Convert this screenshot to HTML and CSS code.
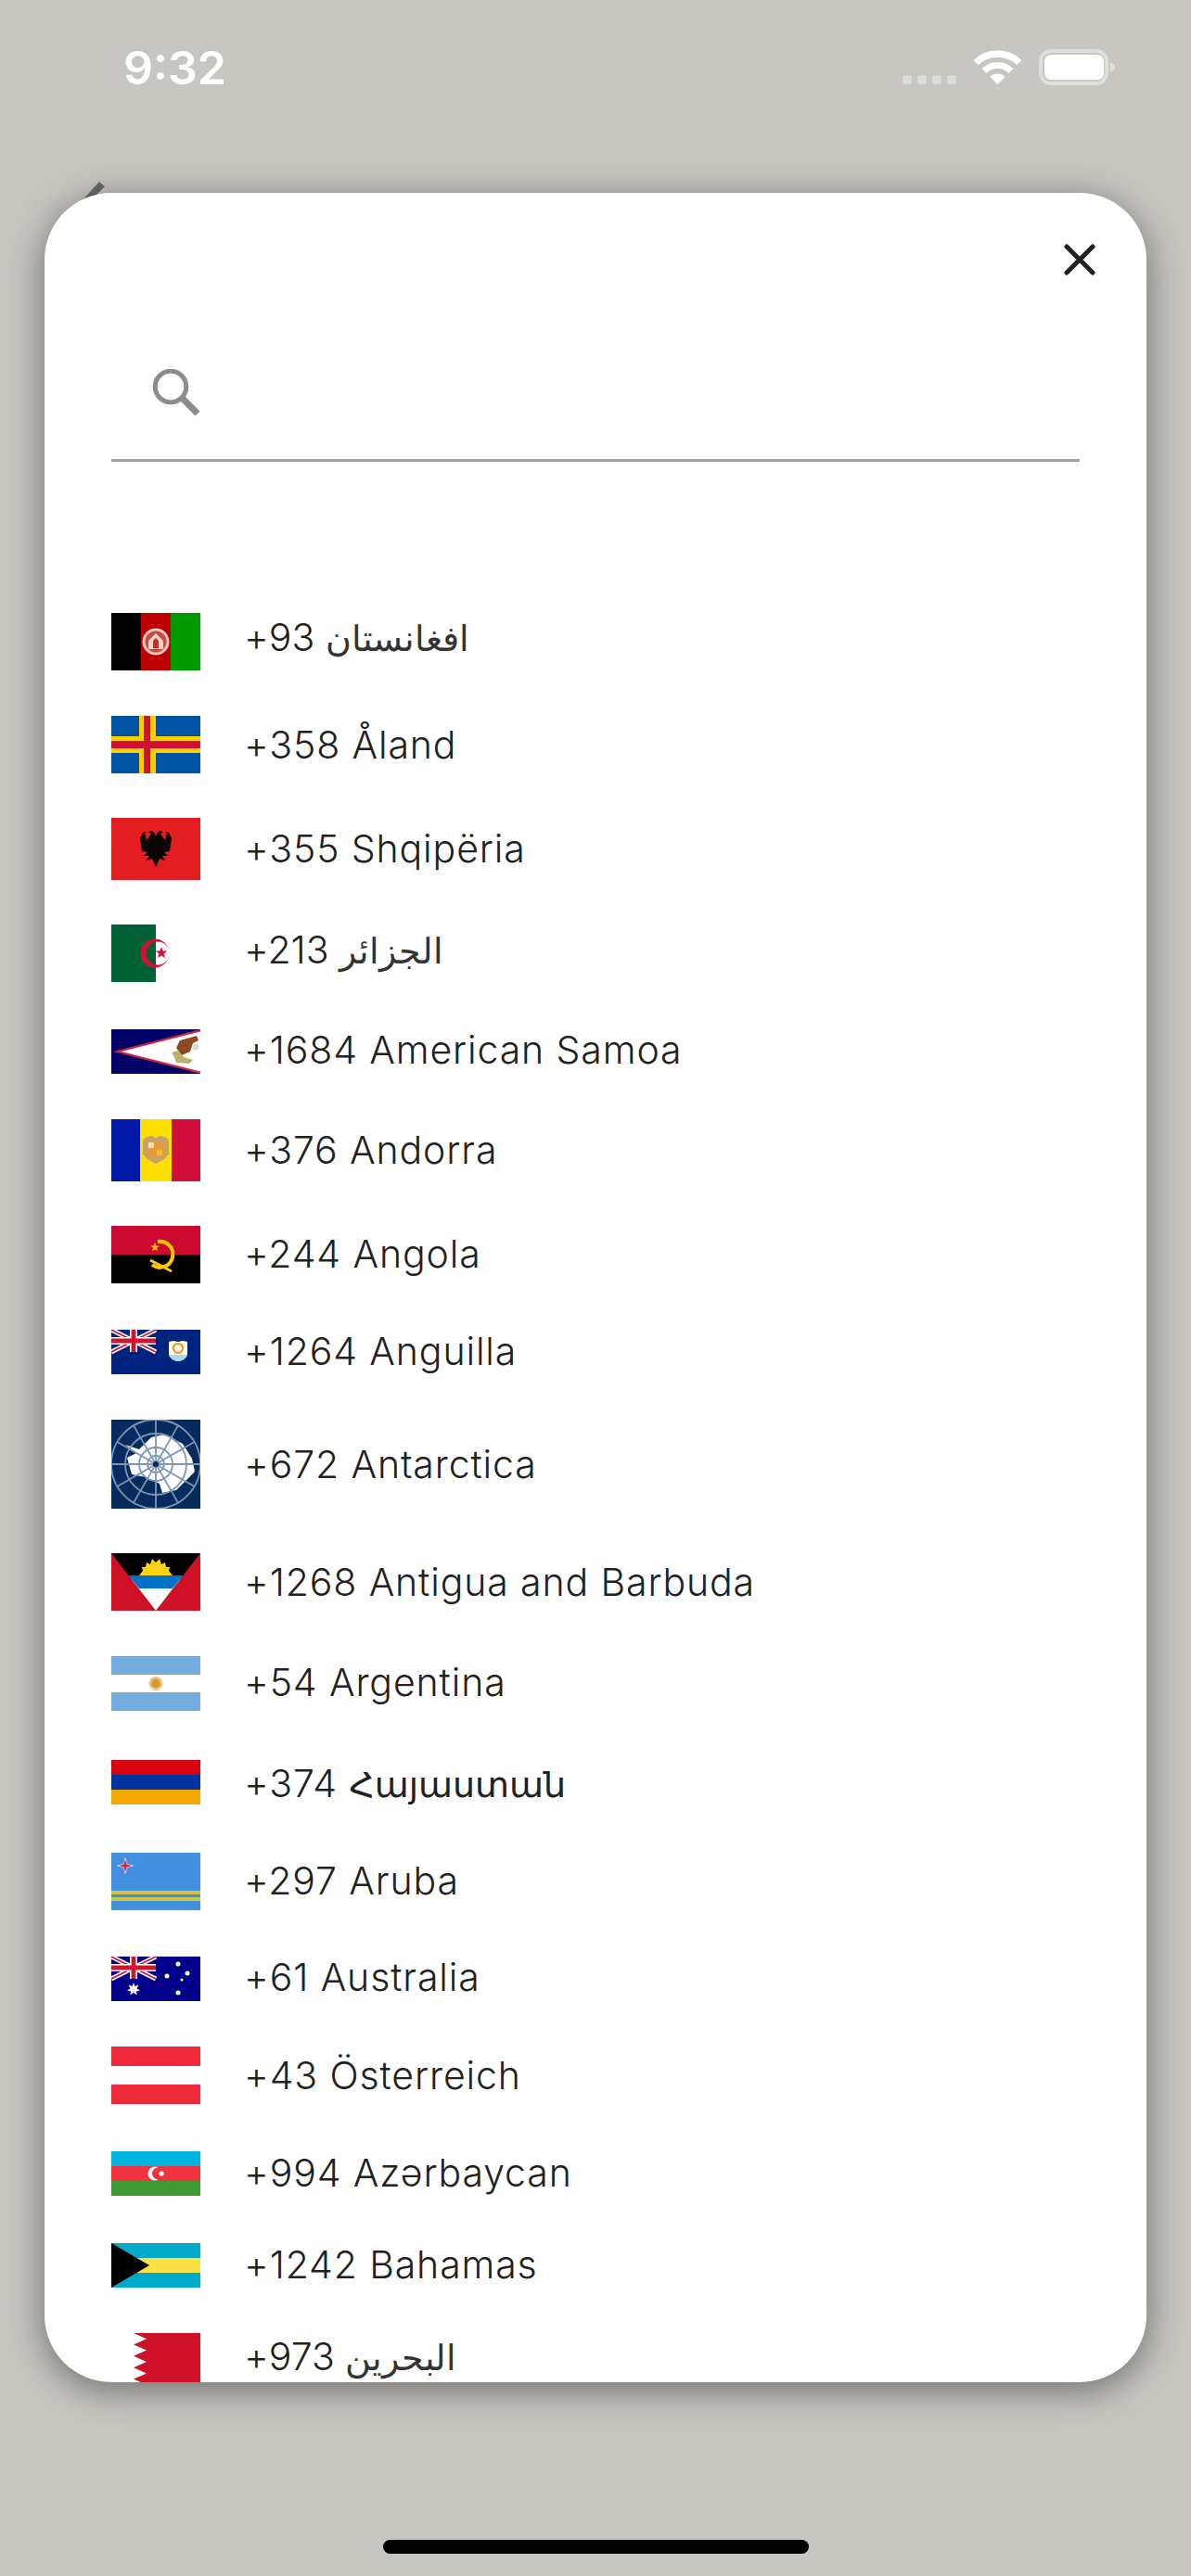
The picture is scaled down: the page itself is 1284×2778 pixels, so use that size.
FILE: index.html
```html
<!DOCTYPE html>
<html lang="en">
<head>
<meta charset="utf-8">
<title>Country code picker</title>
<link rel="stylesheet" href="styles.css">
</head>
<body>
<div class="screen">
  <svg class="behind" viewBox="0 0 40 40"><path d="M22 1 28 6 4 30 0 25Z"/></svg>
  <header class="status">
    <span class="time">9:32</span>
    <div class="status-icons">
      <svg class="signal" viewBox="0 0 58 10"><rect width="10" height="10" rx="3"/><rect x="16" width="10" height="10" rx="3"/><rect x="32" width="10" height="10" rx="3"/><rect x="48" width="10" height="10" rx="3"/></svg>
      <svg class="wifi" viewBox="0 0 51 37"><g fill="none" stroke="#fff"><path stroke-width="7.5" d="M2.2 13.7A33 33 0 0 1 48.8 13.7"/><path stroke-width="7" d="M11 22.5A20.5 20.5 0 0 1 40 22.5"/></g><path fill="#fff" d="M25.5 37 17.3 28.8A11.6 11.6 0 0 1 33.7 28.8Z"/></svg>
      <svg class="battery" viewBox="0 0 82 39"><rect x="2" y="2" width="71" height="35" rx="11" fill="none" stroke="#dededa" stroke-width="4"/><rect x="6" y="6" width="64" height="27" rx="7" fill="#fff"/><path fill="#dededa" d="M77 14c3 1 5 3 5 5.500s-2 4.500-5 5.500Z"/></svg>
    </div>
  </header>

  <main class="card">
    <div class="close-row">
      <svg class="close" viewBox="0 0 34 34"><path d="M3 3 31 31M31 3 3 31"/></svg>
    </div>
    <div class="search">
      <svg class="search-icon" viewBox="0 0 52 52"><circle cx="20" cy="19" r="16.800" /><path d="M33 32 49 48"/></svg>
    </div>
    <ul class="list">
      <li class="row m9">
        <svg class="flag h62" viewBox="0 0 96 62"><rect width="96" height="62" fill="#be0000"/><rect width="32" height="62" fill="#000"/><rect x="64" width="32" height="62" fill="#009a00"/><g class="soft"><circle cx="48" cy="31" r="13" fill="#c84a40" stroke="#ecc8c0" stroke-width="3"/><path d="M40 39h16v-9l-8-8-8 8Z" fill="#f0d4cc"/><path d="M45 38v-8l3-3 3 3v8Z" fill="#be3028"/></g></svg>
        <span class="name">+93 <span class="ar wide">افغانستان</span></span>
      </li>
      <li class="row g49 m1">
        <svg class="flag h62" viewBox="0 0 96 62"><rect width="96" height="62" fill="#0053a5"/><path fill="#ffce00" d="M30 0h18v22h48v18H48v22H30V40H0V22h30Z"/><path fill="#d21034" d="M35 0h7v27h54v8H42v27h-7V35H0v-8h35Z"/></svg>
        <span class="name">+358 Åland</span>
      </li>
      <li class="row m2">
        <svg class="flag h67" viewBox="0 0 96 67"><rect width="96" height="67" fill="#e41e20"/><path class="soft" fill="#0a0606" d="M48 53 44 44 38 46 41 41 35 41 39 37 33 36 31 22 34 16 38 15 36 17 38 24 41 20 43 17 40 15 44 14 47 17 48 20 49 17 52 14 56 15 53 17 55 20 58 24 60 17 58 15 62 16 65 22 63 36 57 37 61 41 55 41 58 46 52 44Z"/></svg>
        <span class="name">+355 Shqipëria</span>
      </li>
      <li class="row m7">
        <svg class="flag h62" viewBox="0 0 96 62"><rect width="96" height="62" fill="#fff"/><rect width="48" height="62" fill="#006233"/><g class="soft"><path fill="#d21034" fill-rule="evenodd" d="M47 15.500a15.500 15.500 0 1 0 0 31 15.500 15.500 0 0 0 15-11.500 12.500 12.500 0 1 1 0-8 15.500 15.500 0 0 0-15-11.500Z"/><path fill="#d21034" d="m54 24 1.700 4.400 4.700.2-3.700 3 1.300 4.500-4-2.600-4 2.600 1.300-4.500-3.700-3 4.700-.2Z"/></g></svg>
        <span class="name">+213 <span class="ar">الجزائر</span></span>
      </li>
      <li class="row g51 m5">
        <svg class="flag h48" viewBox="0 0 96 48"><rect width="96" height="48" fill="#000066"/><path fill="#c8283c" d="M96 0 2 24 96 48Z"/><path fill="#fff" d="M96 2.500 11 24 96 45.500Z"/><g class="soft"><path fill="#8a4b1e" d="M92 7 74 12 70 20 76 28 85 24 88 15 94 12Z"/><path fill="#bdb06a" d="M65 25 72 23 78 30 88 33 84 37 70 36 68 30Z"/><circle cx="91" cy="19" r="3.500" fill="#d8d8d8"/></g></svg>
        <span class="name">+1684 American Samoa</span>
      </li>
      <li class="row g49 m2">
        <svg class="flag h67" viewBox="0 0 96 67"><rect width="96" height="67" fill="#fedf00"/><rect width="31" height="67" fill="#0018a8"/><rect x="65" width="31" height="67" fill="#d0103a"/><g class="soft"><path fill="#c4a26b" d="M36 20 43 18 48 20 53 18 60 20 62 24V38L56 44 48 48 40 44 34 38V24Z"/><rect x="39" y="24" width="18" height="17" rx="2" fill="#ea9a3c"/><rect x="40" y="25" width="6" height="6" fill="#f4e4a0"/><rect x="49" y="33" width="6" height="6" fill="#e8c030"/></g></svg>
        <span class="name">+376 Andorra</span>
      </li>
      <li class="row m2">
        <svg class="flag h62" viewBox="0 0 96 62"><rect width="96" height="31" fill="#cc092f"/><rect y="31" width="96" height="31" fill="#000"/><g class="soft"><g fill="none" stroke="#ffcb00"><path stroke-width="4" d="M50 17A14 14 0 1 1 44 42"/><path stroke-width="3" d="M42 37 65 49"/></g><path fill="#ffcb00" d="m47 18 1.200 3.400 3.600.1-2.900 2.200 1 3.500-2.900-2-2.900 2 1-3.500-2.900-2.200 3.600-.1Z"/></g></svg>
        <span class="name">+244 Angola</span>
      </li>
      <li class="row g50 m3">
        <svg class="flag h48" viewBox="0 0 96 48"><rect width="96" height="48" fill="#00247d"/><g fill="none"><path stroke="#fff" stroke-width="4.800" d="M0 0 48 24M48 0 0 24"/><path stroke="#cf142b" stroke-width="1.600" d="M0 0 48 24M48 0 0 24"/><path stroke="#fff" stroke-width="8" d="M24 0V24M0 12H48"/><path stroke="#cf142b" stroke-width="4.800" d="M24 0V24M0 12H48"/></g><g class="soft"><path fill="#fff" d="M62 13 67 12 72 13 77 12 82 13V26C82 30 76 34 72 34 68 34 62 30 62 26Z"/><path fill="#a8d8ea" d="M62 27H82C81 31 76 34 72 34 68 34 63 31 62 27Z"/><circle cx="72" cy="20" r="5" fill="none" stroke="#f6a020" stroke-width="2.500"/></g></svg>
        <span class="name">+1264 Anguilla</span>
      </li>
      <li class="row g49 m1">
        <svg class="flag h96" viewBox="0 0 96 96"><rect width="96" height="96" fill="#072b5f"/><path class="soft" fill="#fff" d="M43 19 57 16 77 26 87 42 90 56 80 66 70 76 55 79 52 69 37 62 22 59 17 41 27 36 15 27 30 32 38 24Z"/><g class="soft" fill="none" stroke="#7f95b5" stroke-width="1.800"><circle cx="48" cy="48" r="18"/><circle cx="48" cy="48" r="33"/><circle cx="48" cy="48" r="48"/><path d="M48 0V96M0 48H96M24 6.400 72 89.600M72 6.400 24 89.600M6.400 24 89.600 72M89.600 24 6.400 72"/><circle cx="48" cy="48" r="9"/></g><circle cx="48" cy="48" r="3" fill="#072b5f"/></svg>
        <span class="name">+672 Antarctica</span>
      </li>
      <li class="row m1">
        <svg class="flag h62" viewBox="0 0 96 62"><rect width="96" height="62" fill="#ce1126"/><path d="M0 0H96L48 62Z" fill="#000"/><path fill="#fff" d="M20.900 27H75.100L48 62Z"/><path fill="#0072c6" d="M18.600 24H77.400L66 38H30Z"/><path class="soft" fill="#fcd116" d="M30 24 34 19 33 15 37 15 38 10 42 12 44 6 48 10 52 6 54 12 58 10 59 15 63 15 62 19 66 24Z"/></svg>
        <span class="name">+1268 Antigua and Barbuda</span>
      </li>
      <li class="row g49 m4">
        <svg class="flag h59" viewBox="0 0 96 59"><rect width="96" height="59" fill="#74acdf"/><rect y="20" width="96" height="19" fill="#fff"/><g class="soft"><circle cx="48" cy="29.500" r="7.500" fill="#e9c98f"/><circle cx="48" cy="29.500" r="5" fill="#d99a2b"/></g></svg>
        <span class="name">+54 Argentina</span>
      </li>
      <li class="row g53 am">
        <svg class="flag h48" viewBox="0 0 96 48"><rect width="96" height="16" fill="#d90012"/><rect y="16" width="96" height="16" fill="#0033a0"/><rect y="32" width="96" height="16" fill="#f2a800"/></svg>
        <span class="name">+374 <span class="hy">Հայաստան</span></span>
      </li>
      <li class="row g52 m2">
        <svg class="flag h62" viewBox="0 0 96 62"><rect width="96" height="62" fill="#418fde"/><rect y="41" width="96" height="4" fill="#d4c43a"/><rect y="48" width="96" height="4" fill="#d4c43a"/><g class="soft"><path fill="#e9e9f0" d="M15 4 17 12 25 14 17 16 15 24 13 16 5 14 13 12Z"/><path fill="#c8284c" d="M15 7 16.600 12.400 22 14 16.600 15.600 15 21 13.400 15.600 8 14 13.400 12.400Z"/></g></svg>
        <span class="name">+297 Aruba</span>
      </li>
      <li class="row g50 m5">
        <svg class="flag h48" viewBox="0 0 96 48"><rect width="96" height="48" fill="#00008b"/><g fill="none"><path stroke="#fff" stroke-width="4.800" d="M0 0 48 24M48 0 0 24"/><path stroke="#cf142b" stroke-width="1.600" d="M0 0 48 24M48 0 0 24"/><path stroke="#fff" stroke-width="8" d="M24 0V24M0 12H48"/><path stroke="#cf142b" stroke-width="4.800" d="M24 0V24M0 12H48"/></g><g class="soft" fill="#fff"><path d="M24 28 25.500 32 29.500 30.500 27.500 34.500 31 36.500 27 37.500 27.500 41.500 24 39 20.500 41.500 21 37.500 17 36.500 20.500 34.500 18.500 30.500 22.500 32Z"/><circle cx="72" cy="8" r="2.500"/><circle cx="60" cy="21" r="2.500"/><circle cx="82" cy="18" r="2.500"/><circle cx="76" cy="25" r="1.500"/><circle cx="72" cy="39" r="2.500"/></g></svg>
        <span class="name">+61 Australia</span>
      </li>
      <li class="row g49 m1">
        <svg class="flag h62" viewBox="0 0 96 62"><rect width="96" height="62" fill="#ed2939"/><rect y="21" width="96" height="20" fill="#fff"/></svg>
        <span class="name">+43 Österreich</span>
      </li>
      <li class="row g51 m3">
        <svg class="flag h48" viewBox="0 0 96 48"><rect width="96" height="16" fill="#00b5e2"/><rect y="16" width="96" height="16" fill="#ef3340"/><rect y="32" width="96" height="16" fill="#3f9c35"/><path class="soft" fill="#fff" d="M47 16.500a7.500 7.500 0 1 0 0 15 7.500 7.500 0 0 0 3.500-1 6 6 0 1 1 0-13 7.500 7.500 0 0 0-3.500-1Z"/><circle cx="54" cy="24" r="2.600" fill="#fff"/></svg>
        <span class="name">+994 Azərbaycan</span>
      </li>
      <li class="row g51 m3">
        <svg class="flag h48" viewBox="0 0 96 48"><rect width="96" height="48" fill="#00abc9"/><rect y="16" width="96" height="16" fill="#fae042"/><path d="M0 0 41 24 0 48Z" fill="#000"/></svg>
        <span class="name">+1242 Bahamas</span>
      </li>
      <li class="row g49 m11">
        <svg class="flag h62" viewBox="0 0 96 62"><path fill="#ce1126" d="M96 0H24L38 6.200 24 12.400 38 18.600 24 24.800 38 31 24 37.200 38 43.400 24 49.600 38 55.800 24 62H96Z"/></svg>
        <span class="name">+973 <span class="ar">البحرين</span></span>
      </li>
    </ul>
  </main>

  <div class="home"></div>
</div>
</body>
</html>
```
FILE: styles.css
```css
* {
  box-sizing: border-box;
}

html,
body {
  margin: 0;
  padding: 0;
}

body {
  background: #c7c6c1;
  font-family: Inter, "DejaVu Sans", "Noto Sans", sans-serif;
}

.screen {
  position: relative;
  display: flex;
  flex-direction: column;
  width: 1284px;
  height: 2778px;
  overflow: hidden;
}

.behind {
  position: absolute;
  left: 85px;
  top: 195px;
  width: 40px;
  height: 40px;
  fill: #6a6a6a;
}

.status {
  display: flex;
  justify-content: space-between;
  align-items: flex-start;
  height: 208px;
  padding: 53px 82px 0 133px;
}

.time {
  color: #fff;
  font-size: 50px;
  font-weight: 600;
  line-height: 40px;
}

.status-icons {
  display: flex;
  align-items: flex-start;
  gap: 19px;
}

.signal {
  width: 58px;
  height: 10px;
  margin-top: 28px;
  fill: #dcdcd8;
}

.wifi {
  width: 51px;
  height: 37px;
  margin-top: 1px;
}

.battery {
  width: 82px;
  height: 39px;
}

.card {
  position: relative;
  height: 2361px;
  margin: 0 48px;
  background: #fff;
  border-radius: 72px;
  box-shadow: 0 8px 40px rgba(0, 0, 0, 0.46);
  overflow: hidden;
}

.close-row {
  display: flex;
  justify-content: flex-end;
  padding: 55px 55px 0 0;
}

.close {
  width: 34px;
  height: 34px;
  fill: none;
  stroke: #212121;
  stroke-width: 5;
  stroke-linecap: round;
}

.search {
  display: flex;
  margin: 100px 72px 0;
  padding: 0 0 46px 44px;
  border-bottom: 3px solid #a4a4a4;
}

.search-icon {
  display: block;
  width: 52px;
  height: 52px;
  margin-top: 1px;
  margin-bottom: -1px;
  fill: none;
  stroke: #8c8c8c;
  stroke-width: 5;
}

.search-icon path {
  stroke-width: 7;
}

.list {
  margin: 163px 0 0;
  padding: 0 72px;
  list-style: none;
}

.row {
  display: flex;
  align-items: center;
  gap: 47px;
  margin-top: 48px;
}

.row:first-child {
  margin-top: 0;
}

.g49 { margin-top: 49px; }
.g50 { margin-top: 50px; }
.g51 { margin-top: 51px; }
.g52 { margin-top: 52px; }
.g53 { margin-top: 53px; }

.flag {
  display: block;
  flex: none;
  width: 96px;
}

.soft {
  filter: blur(0.5px);
}

.h48 { height: 48px; }
.h59 { height: 59px; }
.h62 { height: 62px; }
.h67 { height: 67px; }
.h96 { height: 96px; }

.name {
  color: #212121;
  font-size: 41px;
  font-weight: 350;
  letter-spacing: 0.88px;
  line-height: 40px;
  white-space: nowrap;
}

.ar {
  color: #333;
  font-size: 38px;
  letter-spacing: 0;
}

.hy {
  font-size: 38px;
  font-weight: 400;
  letter-spacing: 0;
}

.m1 .name { margin-bottom: 1px; }
.m2 .name { margin-bottom: 2px; }
.m3 .name { margin-bottom: 3px; }
.m4 .name { margin-bottom: 4px; }
.m5 .name { margin-bottom: 5px; }
.m7 .name { margin-bottom: 7px; }
.m9 .name { margin-bottom: 9px; }
.m11 .name { margin-bottom: 11px; }
.am .name { margin-top: 3px; }

.home {
  align-self: center;
  width: 459px;
  height: 15px;
  margin-top: 170px;
  background: #000;
  border-radius: 8px;
}
```
